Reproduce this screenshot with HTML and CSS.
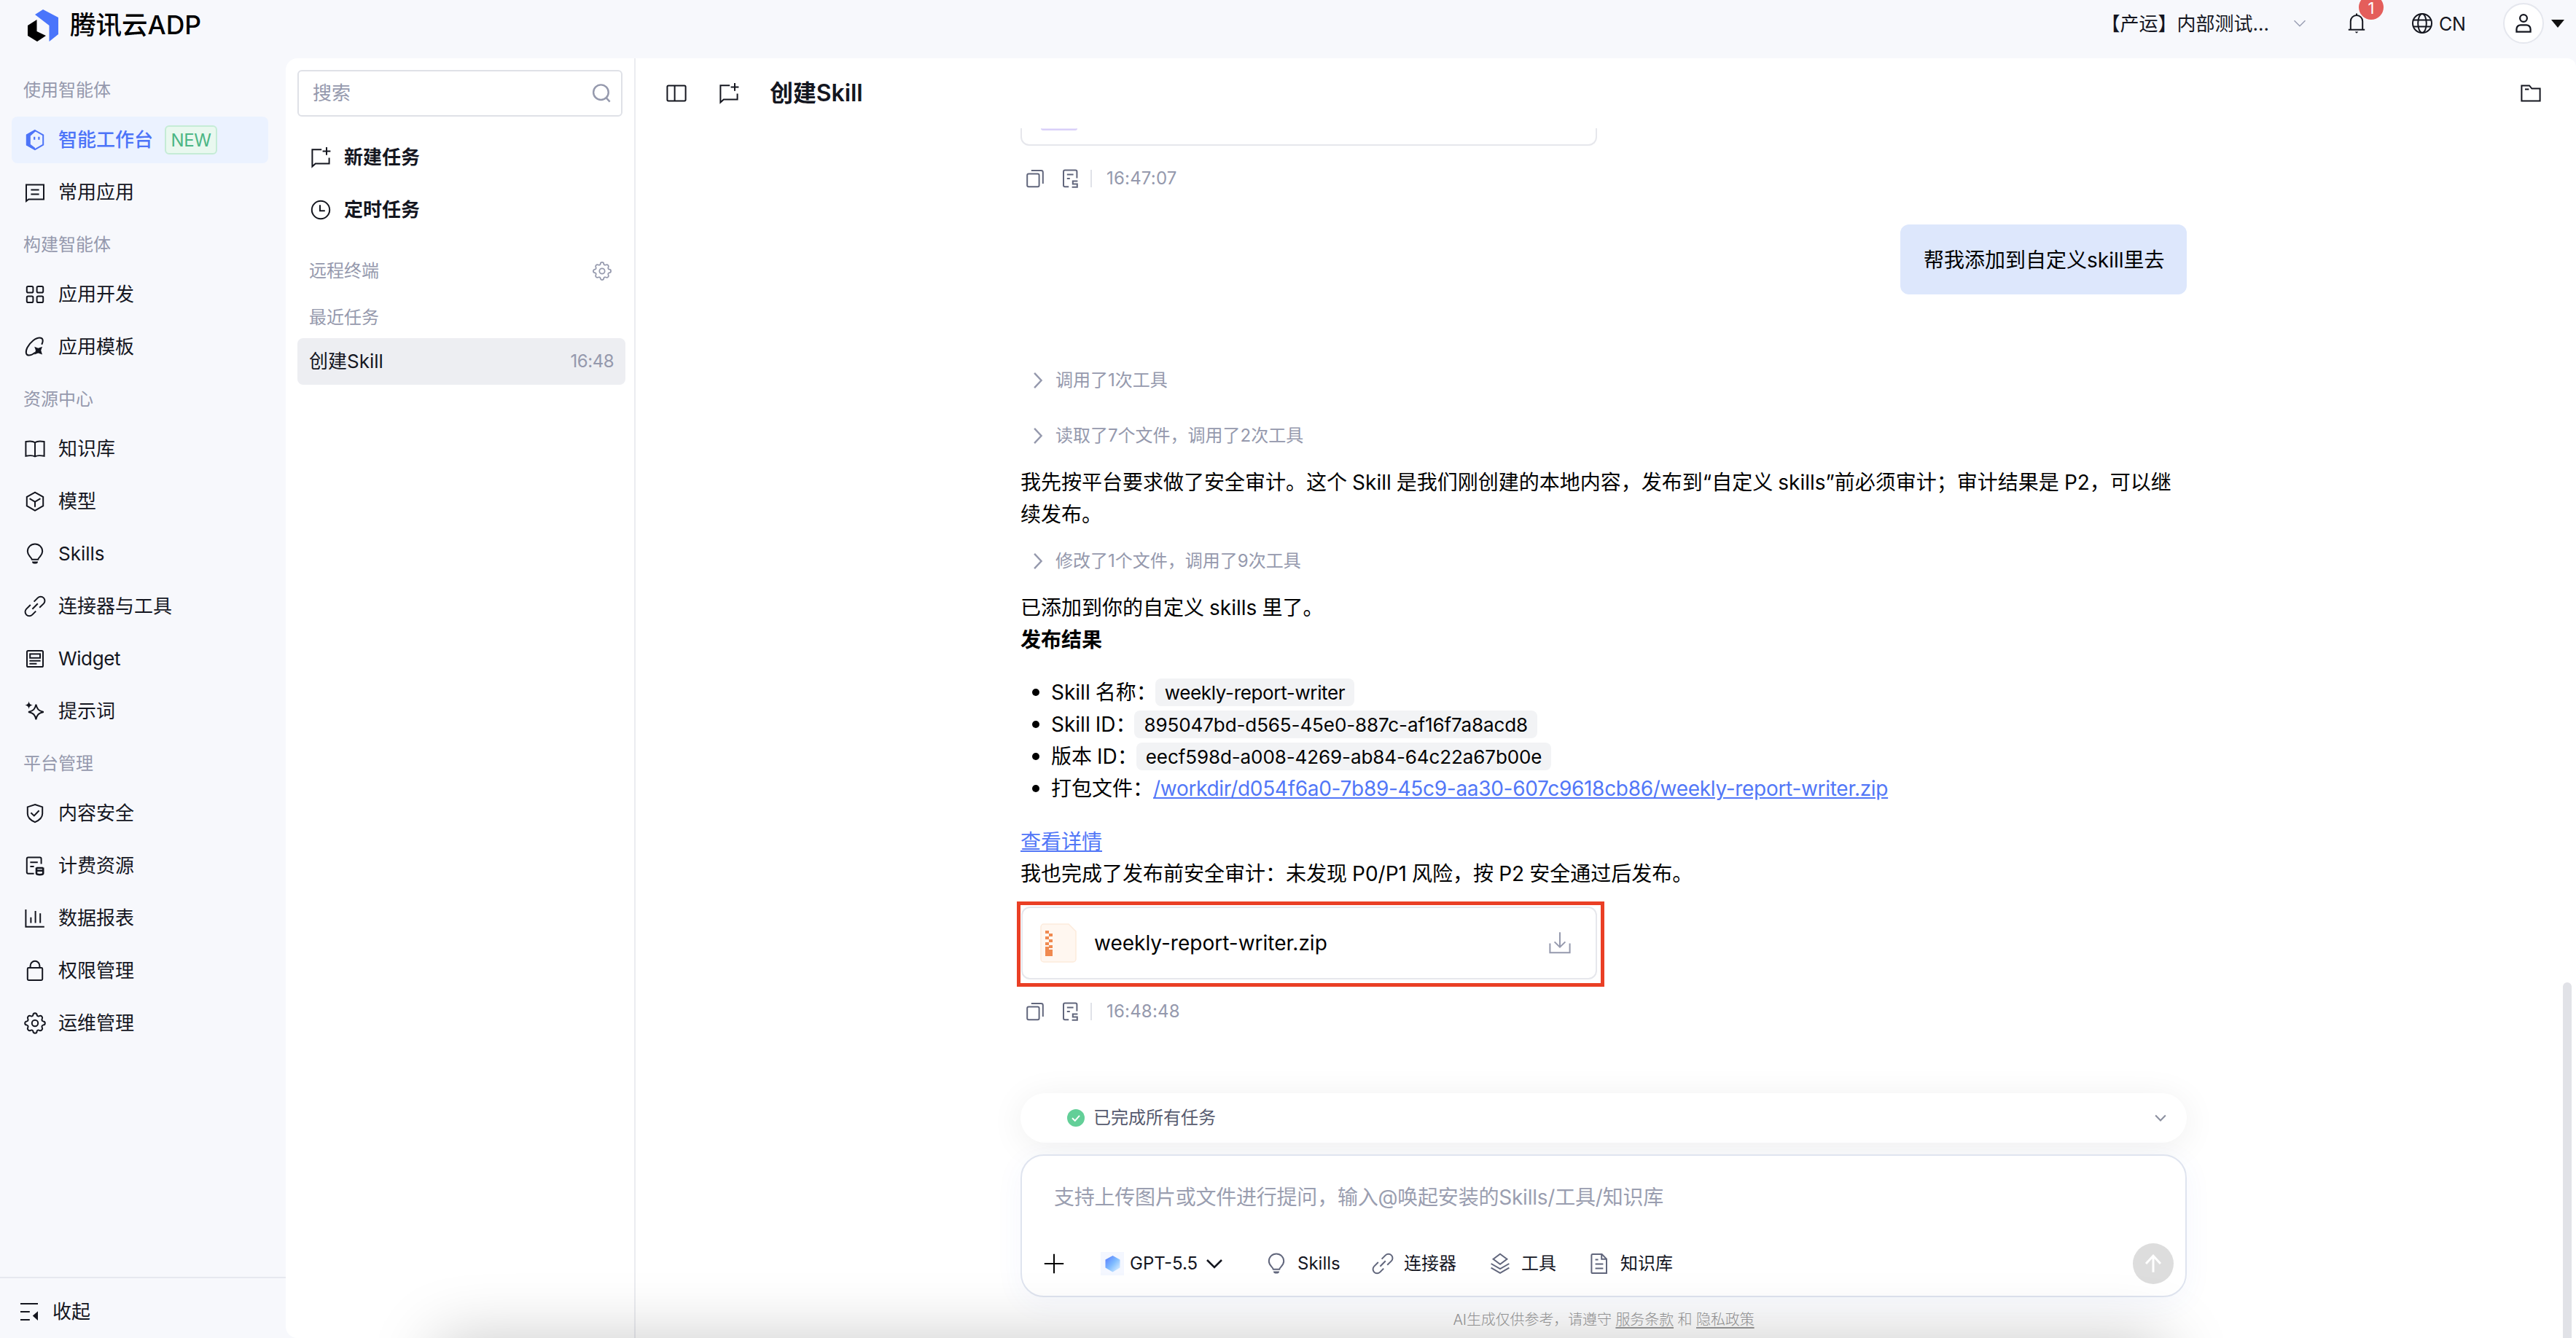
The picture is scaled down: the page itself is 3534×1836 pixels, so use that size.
FILE: index.html
```html
<!DOCTYPE html>
<html lang="zh-CN">
<head>
    <meta charset="UTF-8">
    <meta name="viewport" content="width=device-width, initial-scale=1.0">
    <title>腾讯云ADP</title>
    <link rel="stylesheet" href="styles.css">
</head>
<body>
    <!-- Shared icons -->
    <svg class="sprite" width="0" height="0">
        <symbol id="i-newchat" viewBox="0 0 16 16"><path d="M8.6 2.6H2.2v11.6l2.2-2h9.4V8.2M12 1v5.4M9.3 3.7h5.4"/></symbol>
        <symbol id="i-bulb" viewBox="0 0 16 16"><path d="M5.9 11.9C5.6 10.2 2.9 9.3 2.9 6.3a5.1 5.1 0 0 1 10.2 0c0 3-2.7 3.9-3 5.6z"/><path d="M6 13.2h4v.3a1.2 1.2 0 0 1-1.2 1.2H7.2A1.2 1.2 0 0 1 6 13.5z" class="solid"/></symbol>
        <symbol id="i-link" viewBox="0 0 16 16"><path d="M7.3 4.8l2.6-2.6a2.8 2.8 0 0 1 4 4l-2.8 2.7M8.6 11.3l-2.5 2.5a2.8 2.8 0 0 1-4-4L4.9 7M6.2 9.9l3.7-3.8"/></symbol>
        <symbol id="i-gear" viewBox="0 0 16 16"><path d="M6.7 2.4a1.3 1.3 0 0 1 2.6 0c.2.8 1 1.1 1.7.7a1.4 1.4 0 0 1 1.9 1.9c-.4.7-.1 1.5.7 1.7a1.3 1.3 0 0 1 0 2.6c-.8.2-1.1 1-.7 1.7a1.4 1.4 0 0 1-1.9 1.9c-.7-.4-1.5-.1-1.7.7a1.3 1.3 0 0 1-2.6 0c-.2-.8-1-1.1-1.7-.7A1.4 1.4 0 0 1 3.1 11c.4-.7.1-1.5-.7-1.7a1.3 1.3 0 0 1 0-2.6c.8-.2 1.1-1 .7-1.7A1.4 1.4 0 0 1 5 3.1c.7.4 1.5.1 1.7-.7z"/><circle cx="8" cy="8" r="2.1"/></symbol>
        <symbol id="i-copy" viewBox="0 0 16 16"><rect x="2.6" y="4.8" width="8.2" height="8.8" rx="1"/><path d="M5.4 2.5h6.8a1.2 1.2 0 0 1 1.2 1.2v7.8"/></symbol>
        <symbol id="i-log" viewBox="0 0 16 16"><path d="M6.6 13.6H4a1 1 0 0 1-1-1V3.3a1 1 0 0 1 1-1h7.2a1 1 0 0 1 1 1v4.4M5.4 5.3h4.4M5.4 8h2M12.7 9.8H9.4v2h3v2.1H8.8"/></symbol>
        <symbol id="i-down" viewBox="0 0 16 16"><path d="M3 5.5l5 5 5-5"/></symbol>
        <symbol id="i-right" viewBox="0 0 16 16"><path d="M5.2 2.2l5.4 5.8-5.4 5.8"/></symbol>
    </svg>

    <div class="page">
        <!-- Top bar -->
        <header class="topbar">
            <div class="brand">
                <svg class="brand-logo" viewBox="0 0 44 44"><path d="M21 0L42 11v23L29.5 44V22L10 7z" fill="#4a75fb"/><path d="M12.5 14v16L25 36l-12 8L0 36V22z" fill="#000"/></svg>
                <span class="brand-name">腾讯云ADP</span>
            </div>
            <div class="topbar-right">
                <span class="space-name">【产运】内部测试...</span>
                <svg class="icon space-arrow"><use href="#i-down"/></svg>
                <div class="bell">
                    <svg class="icon" viewBox="0 0 16 16"><path d="M2.4 12.4h11.2M3.9 12.4V6.6a4.1 4.1 0 0 1 8.2 0v5.8M8 2.4V1.2"/><path d="M6.8 13.7h2.4L8 14.9z" class="solid"/></svg>
                    <span class="bell-count">1</span>
                </div>
                <svg class="icon globe" viewBox="0 0 16 16"><circle cx="8" cy="8" r="6.5"/><ellipse cx="8" cy="8" rx="2.9" ry="6.5"/><path d="M2 5.8h12M2 10.2h12"/></svg>
                <span class="lang">CN</span>
                <div class="avatar">
                    <svg class="icon" viewBox="0 0 16 16"><circle cx="8" cy="4.3" r="2.6"/><path d="M2.9 14.2v-2a3 3 0 0 1 3-3h4.2a3 3 0 0 1 3 3v2z"/></svg>
                </div>
                <span class="caret"></span>
            </div>
        </header>

        <div class="layout">
            <!-- Sidebar -->
            <nav class="sidebar">
                <div class="nav-title first">使用智能体</div>
                <a class="nav-item active">
                    <svg class="icon" viewBox="0 0 16 16"><path d="M8 1.5l5.6 3.2v6.6L8 14.5l-5.6-3.2V4.7z"/><path d="M8 1L2 4.4v7.2L8 15v-1.6L4.9 11V5.2L8.600 2z" class="solid"/><path d="M7.600 5.900v2M10.700 5.900v2" stroke-width="1.1"/></svg>
                    <span>智能工作台</span><em class="tag-new">NEW</em>
                </a>
                <a class="nav-item">
                    <svg class="icon" viewBox="0 0 16 16"><path d="M2 14V2.7h12v10H3.6zM5.2 6.2h5.6M5.2 9.2h5.6"/></svg>
                    <span>常用应用</span>
                </a>
                <div class="nav-title">构建智能体</div>
                <a class="nav-item">
                    <svg class="icon" viewBox="0 0 16 16"><rect x="2.4" y="2.5" width="4.3" height="4.3" rx=".9"/><rect x="9.3" y="2.5" width="4.3" height="4.3" rx=".9"/><rect x="2.4" y="9.2" width="4.3" height="4.3" rx=".9"/><rect x="9.3" y="9.2" width="4.3" height="4.3" rx=".9"/></svg>
                    <span>应用开发</span>
                </a>
                <a class="nav-item">
                    <svg class="icon" viewBox="0 0 16 16"><path d="M12.6 6.4c1.4-2.9.8-4.6-1.4-4.6-2.8 0-6.600 3-8.500 6.700-1.500 3.200-.9 5.300 1.200 5.300 1.300 0 2.700-.7 4.200-1.900"/><path d="M7.600 7.900l2.600 1 2.800-1-.9 2.500.9 2.900-2.800-1-2.600 1 .9-2.900z" class="solid"/></svg>
                    <span>应用模板</span>
                </a>
                <div class="nav-title">资源中心</div>
                <a class="nav-item">
                    <svg class="icon" viewBox="0 0 16 16"><path d="M8 3.6C6.800 2.700 3.800 2.600 1.700 3v9.900c2.100-.5 5.100-.4 6.300.3 1.200-.7 4.200-.8 6.300-.3V3C12.200 2.600 9.200 2.700 8 3.600zM8 3.600v9.600"/></svg>
                    <span>知识库</span>
                </a>
                <a class="nav-item">
                    <svg class="icon" viewBox="0 0 16 16"><path d="M8 1.800l5.600 3.100v6.200L8 14.300l-5.600-3.200V4.900zM4.300 6.100L8 8.300l3.700-2.200M8 8.300v3.600"/></svg>
                    <span>模型</span>
                </a>
                <a class="nav-item">
                    <svg class="icon"><use href="#i-bulb"/></svg>
                    <span>Skills</span>
                </a>
                <a class="nav-item">
                    <svg class="icon"><use href="#i-link"/></svg>
                    <span>连接器与工具</span>
                </a>
                <a class="nav-item">
                    <svg class="icon" viewBox="0 0 16 16"><rect x="2.5" y="2.5" width="11" height="11" rx=".8"/><rect x="4.6" y="4.7" width="6.9" height="2.7"/><path d="M4.200 9.400h7.600M4.200 11.400h5"/></svg>
                    <span class="latin">Widget</span>
                </a>
                <a class="nav-item">
                    <svg class="icon" viewBox="0 0 16 16"><path d="M8.700 3.300c.7 3.200 1.700 4.500 5.200 5.200-3.500.7-4.500 1.900-5.200 5.200-.7-3.300-1.700-4.500-5.200-5.200 3.500-.7 4.500-2 5.200-5.200z"/><path d="M3.800 1.100c.3 1.700.9 2.300 2.700 2.700-1.800.4-2.400 1-2.700 2.700-.3-1.700-.9-2.300-2.700-2.700 1.800-.4 2.400-1 2.700-2.700z" class="solid"/></svg>
                    <span>提示词</span>
                </a>
                <div class="nav-title">平台管理</div>
                <a class="nav-item">
                    <svg class="icon" viewBox="0 0 16 16"><path d="M8 2l5.100 1.700v4.500c0 2.800-2.300 4.600-5.100 5.900-2.800-1.300-5.100-3.100-5.100-5.900V3.700z"/><path d="M5.200 7.600l2.200 2.100 3.400-3.600"/></svg>
                    <span>内容安全</span>
                </a>
                <a class="nav-item">
                    <svg class="icon" viewBox="0 0 16 16"><path d="M7.300 13.400H3.400a1 1 0 0 1-1-1V3.200a1 1 0 0 1 1-1h7.900a1 1 0 0 1 1 1v3.600M4.700 5.600h5.200M4.700 8.500h2.600"/><path d="M9 9.300v4c0 .5 1 .8 2.300.8s2.300-.3 2.300-.8v-4M9 11.400h4.600M9 9.500h4.600" stroke-width="1.3"/></svg>
                    <span>计费资源</span>
                </a>
                <a class="nav-item">
                    <svg class="icon" viewBox="0 0 16 16"><path d="M1.700 2v11.900h12.700M5.200 11.200V7.400M8.300 11.200V3M11.600 11.200V4.600"/></svg>
                    <span>数据报表</span>
                </a>
                <a class="nav-item">
                    <svg class="icon" viewBox="0 0 16 16"><rect x="2.9" y="6" width="10.2" height="8.5" rx=".7"/><path d="M4.800 6V4.600a3.200 3.200 0 0 1 6.400 0V6"/></svg>
                    <span>权限管理</span>
                </a>
                <a class="nav-item">
                    <svg class="icon"><use href="#i-gear"/></svg>
                    <span>运维管理</span>
                </a>
                <div class="collapse">
                    <svg class="icon" viewBox="0 0 16 16"><path d="M2 2.500h12M2 8h6.400M2 13.500h6.400" stroke-width="1.1"/><path d="M14 7.600v6.400l-3.600-3.200z" class="solid"/></svg>
                    <span>收起</span>
                </div>
            </nav>

            <div class="content">
                <!-- Task list -->
                <aside class="tasks">
                    <div class="search">
                        <span>搜索</span>
                        <svg class="icon" viewBox="0 0 16 16"><circle cx="7.7" cy="7.3" r="5.5"/><path d="M11.500 11.300l2.700 2.900"/></svg>
                    </div>
                    <div class="task-action">
                        <svg class="icon"><use href="#i-newchat"/></svg>
                        <span>新建任务</span>
                    </div>
                    <div class="task-action">
                        <svg class="icon" viewBox="0 0 16 16"><circle cx="8" cy="8" r="6.1"/><path d="M7.500 4.600v4h3.400"/></svg>
                        <span>定时任务</span>
                    </div>
                    <div class="task-title remote">
                        <span>远程终端</span>
                        <svg class="icon"><use href="#i-gear"/></svg>
                    </div>
                    <div class="task-title recent">最近任务</div>
                    <div class="task-row">
                        <span>创建Skill</span>
                        <time>16:48</time>
                    </div>
                </aside>

                <!-- Chat -->
                <main class="chat">
                    <div class="chat-head">
                        <svg class="icon" viewBox="0 0 16 16"><rect x="1.7" y="2.8" width="12.6" height="10.4" rx=".8"/><path d="M6.800 2.800v10.400"/></svg>
                        <svg class="icon"><use href="#i-newchat"/></svg>
                        <h1>创建Skill</h1>
                        <svg class="icon folder" viewBox="0 0 16 16"><path d="M1.700 2.700H7l1.700 2.100h5.600v8.500H1.700zM4 5.300h2.700"/></svg>
                    </div>

                    <div class="messages">
                        <div class="card-tail"><span></span></div>
                        <div class="msg-tools">
                            <svg class="icon"><use href="#i-copy"/></svg>
                            <svg class="icon"><use href="#i-log"/></svg>
                            <time>16:47:07</time>
                        </div>

                        <div class="bubble">帮我添加到自定义skill里去</div>

                        <div class="step step-first"><svg class="icon"><use href="#i-right"/></svg>调用了1次工具</div>
                        <div class="step step-second"><svg class="icon"><use href="#i-right"/></svg>读取了7个文件，调用了2次工具</div>
                        <p>我先按平台要求做了安全审计。这个 Skill 是我们刚创建的本地内容，发布到“自定义 skills”前必须审计；审计结果是 P2，可以继<br>续发布。</p>
                        <div class="step"><svg class="icon"><use href="#i-right"/></svg>修改了1个文件，调用了9次工具</div>
                        <p>已添加到你的自定义 skills 里了。<br><strong>发布结果</strong></p>
                        <ul>
                            <li>Skill 名称：<code class="skill-name">weekly-report-writer</code></li>
                            <li>Skill ID：<code>895047bd-d565-45e0-887c-af16f7a8acd8</code></li>
                            <li>版本 ID：<code>eecf598d-a008-4269-ab84-64c22a67b00e</code></li>
                            <li>打包文件：<a class="zip-link">/workdir/d054f6a0-7b89-45c9-aa30-607c9618cb86/weekly-report-writer.zip</a></li>
                        </ul>
                        <p class="closing"><a>查看详情</a><br>我也完成了发布前安全审计：未发现 P0/P1 风险，按 P2 安全通过后发布。</p>

                        <div class="file-card">
                            <svg class="file-icon" viewBox="0 0 50 54"><path d="M5 1h34l10 10v38a4 4 0 0 1-4 4H5a4 4 0 0 1-4-4V5a4 4 0 0 1 4-4z" fill="#fff7f0" stroke="#fdebdc" stroke-width="1.5"/><path d="M7 10h5v4H7zM12 14h5v4h-5zM7 18h5v4H7zM12 22h5v4h-5zM7 26h5v4H7zM12 30h5v4h-5zM7 32h5v4h5v9H7z" fill="#f08a50"/></svg>
                            <span>weekly-report-writer.zip</span>
                            <svg class="icon" viewBox="0 0 16 16"><path d="M8 .6v10M4.300 7.200L8 10.800l3.700-3.600M1.200 8.300v6.300h13.600V8.300"/></svg>
                            <div class="highlight"></div>
                        </div>
                        <div class="msg-tools last">
                            <svg class="icon"><use href="#i-copy"/></svg>
                            <svg class="icon"><use href="#i-log"/></svg>
                            <time>16:48:48</time>
                        </div>
                    </div>

                    <!-- Input area -->
                    <div class="composer">
                        <div class="status">
                            <svg class="done" viewBox="0 0 24 24"><circle cx="12" cy="12" r="12" fill="#63cf98"/><path d="M7 12.200l3.800 3.700 6.200-7" fill="none" stroke="#fff" stroke-width="2"/></svg>
                            <span>已完成所有任务</span>
                            <svg class="icon"><use href="#i-down"/></svg>
                        </div>
                        <div class="input-box">
                            <div class="placeholder">支持上传图片或文件进行提问，输入@唤起安装的Skills/工具/知识库</div>
                            <div class="toolbar">
                                <svg class="icon plus" viewBox="0 0 16 16"><path d="M8 1.400v13.200M1.400 8h13.200"/></svg>
                                <div class="model">
                                    <svg viewBox="0 0 32 32">
                                        <defs>
                                            <linearGradient id="gem" x1="0" y1="0" x2="1" y2="1">
                                                <stop offset="0" stop-color="#5577ff"/>
                                                <stop offset=".5" stop-color="#7fbcff"/>
                                                <stop offset="1" stop-color="#e8f6ff"/>
                                            </linearGradient>
                                        </defs>
                                        <rect width="32" height="32" fill="#f4f7ff"/>
                                        <path d="M16.500 5l10 5.500v11l-10 6-10-6v-11z" fill="url(#gem)"/>
                                    </svg>
                                    <span>GPT-5.5</span>
                                    <svg class="icon"><use href="#i-down"/></svg>
                                </div>
                                <div class="tool tool-skills"><svg class="icon"><use href="#i-bulb"/></svg>Skills</div>
                                <div class="tool tool-link"><svg class="icon"><use href="#i-link"/></svg>连接器</div>
                                <div class="tool tool-layers"><svg class="icon" viewBox="0 0 16 16"><path d="M8 1.400l4.700 3.500L8 8.400 3.300 4.900zM1.800 8L8 11.600 14.200 8M1.800 10.800L8 14.400l6.200-3.600"/></svg>工具</div>
                                <div class="tool tool-doc"><svg class="icon" viewBox="0 0 16 16"><path d="M3.500 1.500h6.300l3.200 3.300v9.700H3.500a.8.800 0 0 1-.8-.8V2.300a.8.800 0 0 1 .8-.8zM9.600 1.500v3.400H13M5.300 5.200h2M5.300 8.200h5.400M5.300 11.200h5.400"/></svg>知识库</div>
                                <div class="send"><svg class="icon" viewBox="0 0 16 16"><path d="M8 14.300V2.500M2.700 8L8 2.300 13.300 8"/></svg></div>
                            </div>
                        </div>
                        <div class="notice">AI生成仅供参考，请遵守 <u>服务条款</u> 和 <u>隐私政策</u></div>
                    </div>
                    <div class="scrollbar"></div>
                </main>
            </div>
        </div>
        <div class="dock-shadow"></div>
    </div>
</body>
</html>
```
FILE: styles.css
```css
/* General Styles */
* {
    box-sizing: border-box;
}

body {
    margin: 0;
    font-family: Inter, "Noto Sans CJK SC", sans-serif;
    font-size: 26px;
    line-height: 1.4;
    color: #14161f;
    background-color: #f7f8fc;
}

.sprite {
    position: absolute;
}

.page {
    position: relative;
    height: 1836px;
    overflow: hidden;
    display: flex;
    flex-direction: column;
    white-space: nowrap;
}

.icon {
    width: 32px;
    height: 32px;
    flex: none;
    display: block;
    fill: none;
    stroke: currentColor;
    stroke-width: 1;
}

.solid {
    fill: currentColor;
    stroke: none;
}

/* Top bar */
.topbar {
    height: 80px;
    padding-left: 38px;
    padding-right: 16px;
    display: flex;
    justify-content: space-between;
}

.brand {
    display: flex;
    align-items: center;
    height: 70px;
    gap: 14px;
}

.brand-logo {
    width: 44px;
    height: 44px;
}

.brand-name {
    font-size: 35.5px;
    font-weight: 500;
    color: #000;
}

.topbar-right {
    display: flex;
    align-items: center;
    height: 64px;
}

.space-name {
    padding-top: 2px;
}

.space-arrow {
    width: 24px;
    height: 24px;
    margin-left: 30px;
    color: #9a9fb3;
}

.bell {
    position: relative;
    margin-left: 50px;
}

.bell-count {
    position: absolute;
    left: 19px;
    top: -23px;
    width: 34px;
    height: 34px;
    border-radius: 50%;
    background-color: #e45e5b;
    color: #fff;
    font-size: 22px;
    line-height: 36px;
    text-align: center;
}

.globe {
    margin-left: 58px;
}

.lang {
    margin-left: 7px;
    width: 88px;
    padding-top: 2px;
    font-size: 25px;
    letter-spacing: -0.3px;
}

.avatar {
    width: 56px;
    height: 56px;
    border: 2px solid #e5e7ee;
    border-radius: 50%;
    background-color: #fff;
    display: flex;
    align-items: center;
    justify-content: center;
}

.avatar .icon {
    width: 30px;
    height: 30px;
    stroke-width: 1.2;
}

.caret {
    margin-left: 10px;
    border: 9px solid transparent;
    border-top: 11px solid #111;
    border-bottom: none;
}

.layout {
    flex: 1;
    display: flex;
}

/* Sidebar */
.sidebar {
    width: 392px;
    padding: 12px 24px 0 16px;
    display: flex;
    flex-direction: column;
}

.nav-title {
    height: 64px;
    line-height: 64px;
    margin-bottom: 4px;
    padding-left: 16px;
    font-size: 24px;
    color: #9599ad;
}

.nav-item {
    height: 64px;
    margin-bottom: 8px;
    padding-left: 16px;
    display: flex;
    align-items: center;
    gap: 16px;
    border-radius: 8px;
}

.nav-item.active {
    width: 352px;
    background-color: #ebf2ff;
    color: #4d74f8;
    font-weight: 500;
}

.nav-item .latin {
    letter-spacing: -0.4px;
}

.tag-new {
    height: 40px;
    width: 72px;
    border: 2px solid #c5ecd6;
    border-radius: 6px;
    background-color: #e9f8ef;
    color: #4cb685;
    font-style: normal;
    font-weight: 400;
    font-size: 24px;
    line-height: 38px;
    letter-spacing: -0.3px;
    text-align: center;
}

.collapse {
    margin: auto -24px 0 -16px;
    height: 84px;
    padding: 10px 0 0 24px;
    border-top: 2px solid #e6e8ef;
    display: flex;
    align-items: center;
    gap: 16px;
}

/* White panel */
.content {
    flex: 1;
    display: flex;
    background-color: #fff;
    border-radius: 16px 12px 0 16px;
}

.tasks {
    width: 480px;
    padding: 16px 12px 0 16px;
    border-right: 2px solid #ebecf0;
}

.search {
    width: 446px;
    height: 64px;
    margin-bottom: 20px;
    padding: 0 12px 0 19px;
    border: 2px solid #dfe1e7;
    border-radius: 6px;
    display: flex;
    align-items: center;
    justify-content: space-between;
    color: #9599ad;
}

.search .icon {
    width: 30px;
    height: 30px;
    stroke-width: 1.3;
}

.task-action {
    height: 72px;
    padding-left: 16px;
    display: flex;
    align-items: center;
    gap: 16px;
    font-weight: 600;
}

.task-title {
    height: 64px;
    padding: 0 18px 0 16px;
    display: flex;
    align-items: center;
    justify-content: space-between;
    font-size: 24px;
    color: #9599ad;
}

.task-title.remote {
    margin-top: 16px;
}

.task-title.recent {
    height: 60px;
    padding-top: 4px;
}

.task-title .icon {
    width: 28px;
    height: 28px;
}

.task-row {
    height: 64px;
    padding: 0 16px 0 16px;
    display: flex;
    align-items: center;
    justify-content: space-between;
    border-radius: 8px;
    background-color: #edeef2;
}

.task-row time {
    font-size: 24px;
    letter-spacing: -0.5px;
    color: #9599ad;
}

/* Chat */
.chat {
    position: relative;
    flex: 1;
    display: flex;
    flex-direction: column;
    align-items: center;
    padding-right: 6px;
}

.chat-head {
    width: 100%;
    height: 96px;
    padding: 0 40px;
    display: flex;
    align-items: center;
    gap: 40px;
}

.chat-head h1 {
    margin: 0 auto 0 0;
    font-size: 32px;
    font-weight: 600;
    letter-spacing: -0.1px;
}

.messages {
    width: 1600px;
    flex: 1;
    font-size: 28px;
    line-height: 44px;
    word-spacing: -0.8px;
    color: #000;
}

.card-tail {
    width: 791px;
    height: 24px;
    padding-left: 26px;
    border: 2px solid #e6e7ec;
    border-top: none;
    border-radius: 0 0 12px 12px;
}

.card-tail span {
    display: block;
    width: 50px;
    height: 3px;
    background-color: #ebe6fc;
    border-bottom: 2px solid #d9d0f8;
    border-radius: 0 0 6px 6px;
}

.msg-tools {
    height: 32px;
    margin-top: 29px;
    padding-left: 4px;
    display: flex;
    align-items: center;
    gap: 17px;
    color: #61667c;
}

.msg-tools.last {
    margin-top: 28px;
}

.msg-tools time {
    margin-left: -6px;
    padding-left: 20px;
    border-left: 2px solid #e0e2e8;
    font-size: 24px;
    line-height: 24px;
    letter-spacing: 0.2px;
    color: #9599ad;
}

.bubble {
    width: 393px;
    height: 96px;
    margin: 47px 0 0 auto;
    padding: 0 32px;
    border-radius: 12px;
    background-color: #dde7fc;
    line-height: 98px;
}

.step {
    height: 44px;
    margin-top: 20px;
    padding-left: 10px;
    display: flex;
    align-items: center;
    gap: 10px;
    font-size: 24px;
    color: #9599ad;
}

.step .icon {
    width: 28px;
    height: 28px;
    stroke-width: 1.4;
}

.step-first {
    margin-top: 96px;
}

.step-second {
    margin-top: 32px;
}

.messages p {
    margin: 20px 0 0;
}

.messages p.closing {
    margin-top: 29px;
}

.messages a {
    color: #5277f7;
    text-decoration: underline;
}

.messages ul {
    list-style: none;
    margin: 28px 0 0;
    padding: 0 0 0 16px;
}

.messages li {
    display: flex;
    align-items: center;
    height: 44px;
}

.messages li::before {
    content: "";
    width: 10px;
    height: 10px;
    margin-right: 16px;
    border-radius: 50%;
    background-color: #000;
}

.messages code {
    height: 38px;
    line-height: 40px;
    margin-left: -2px;
    padding: 0 13px;
    border-radius: 8px;
    background-color: #f2f3f5;
    font-family: Inter, sans-serif;
    font-size: 26px;
    letter-spacing: -0.1px;
}

.messages code.skill-name {
    letter-spacing: -0.35px;
}

.messages .zip-link {
    letter-spacing: -0.3px;
}

.file-card {
    position: relative;
    width: 790px;
    height: 100px;
    margin: 23px 0 0 1px;
    padding: 0 33px 0 24px;
    display: flex;
    align-items: center;
    border: 2px solid #e6e7ec;
    border-radius: 12px;
}

.file-icon {
    width: 50px;
    height: 54px;
    margin-right: 24px;
}

.file-card .icon {
    margin-left: auto;
    color: #9599ad;
}

.highlight {
    position: absolute;
    left: -8px;
    top: -9px;
    width: 806px;
    height: 117px;
    border: 5px solid #ea3f25;
}

/* Input area */
.composer {
    width: 1600px;
}

.status {
    height: 68px;
    padding: 0 25px 0 64px;
    display: flex;
    align-items: center;
    border-radius: 34px;
    background-color: #fff;
    box-shadow: 0 6px 48px rgba(0, 0, 0, 0.07);
    font-size: 24px;
    color: #565a6e;
}

.done {
    width: 24px;
    height: 24px;
    margin-right: 12px;
}

.status .icon {
    width: 22px;
    height: 22px;
    margin-left: auto;
    stroke-width: 1.5;
    color: #8b8f9f;
}

.input-box {
    position: relative;
    height: 196px;
    margin-top: 16px;
    padding: 33px 16px 0 28px;
    border: 2px solid #dfe4ef;
    border-radius: 32px;
    background-color: #fff;
    box-shadow: 0 8px 40px rgba(60, 100, 220, 0.05);
}

.placeholder {
    height: 48px;
    line-height: 48px;
    padding-left: 16px;
    font-size: 28px;
    letter-spacing: -0.22px;
    color: #9a9eb0;
}

.toolbar {
    height: 56px;
    margin-top: 39px;
    display: flex;
    align-items: center;
    font-size: 24px;
}

.plus {
    color: #000;
}

.model {
    display: flex;
    align-items: center;
    width: 225px;
    margin-left: 48px;
}

.model svg {
    width: 32px;
    height: 32px;
}

.model span {
    width: 99px;
    margin-left: 8px;
}

.model svg.icon {
    margin-left: 1px;
    stroke-width: 1.3;
}

.tool {
    display: flex;
    align-items: center;
    gap: 13px;
}

.tool .icon {
    color: #61667c;
}

.tool-skills {
    width: 146px;
}

.tool-link {
    width: 161px;
}

.tool-layers {
    width: 136px;
}

.send {
    width: 56px;
    height: 56px;
    margin-left: auto;
    display: flex;
    align-items: center;
    justify-content: center;
    border-radius: 50%;
    background-color: #ddd;
    color: #fff;
}

.send .icon {
    stroke-width: 1.6;
    width: 30px;
    height: 30px;
}

.notice {
    height: 56px;
    line-height: 62px;
    font-size: 20px;
    font-weight: 300;
    letter-spacing: -0.1px;
    text-align: center;
    color: #999;
}

.notice u {
    text-underline-offset: 3px;
}

.scrollbar {
    position: absolute;
    right: 6px;
    bottom: 0;
    width: 12px;
    height: 488px;
    border-radius: 6px 6px 0 0;
    background-color: #e1e2e7;
}

/* Shade rising from the bottom edge of the window */
.dock-shadow {
    position: absolute;
    left: 600px;
    top: 1838px;
    width: 2370px;
    height: 200px;
    box-shadow: 0 0 90px rgba(0, 0, 0, 0.22);
}
```
